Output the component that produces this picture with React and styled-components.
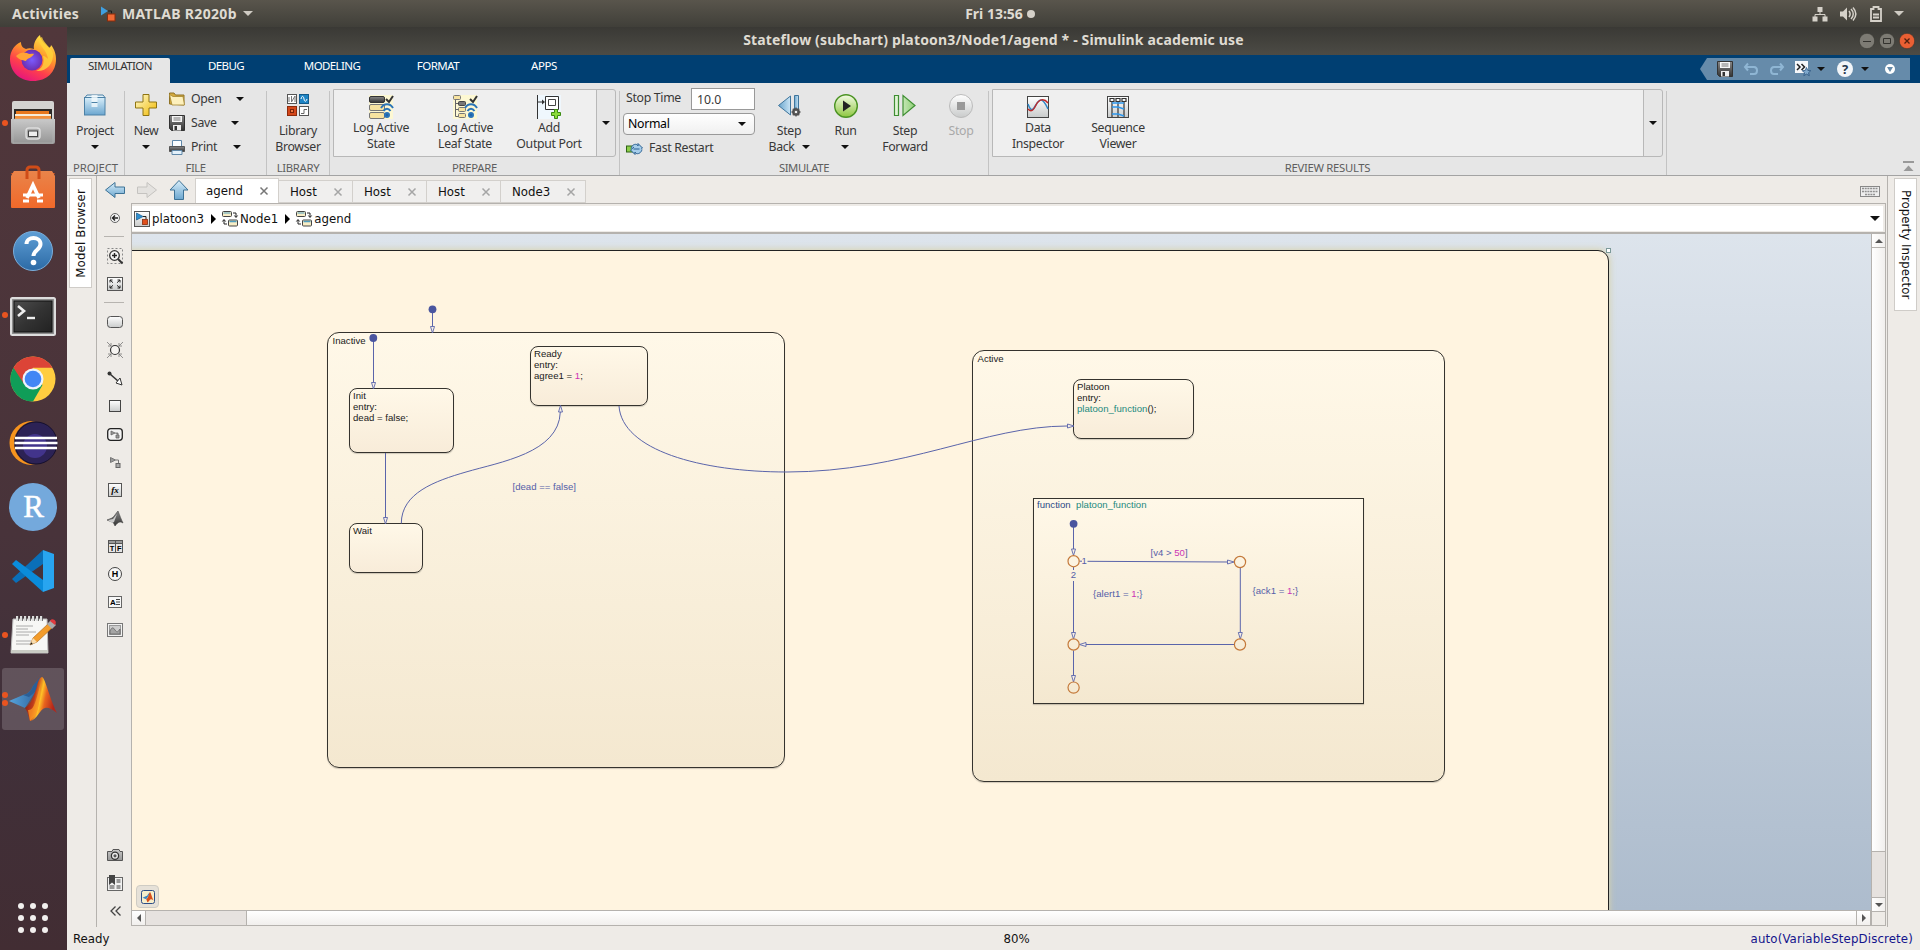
import React from "react";
import styled, { createGlobalStyle, css } from "styled-components";

const ui = `"Noto Sans", "Open Sans", sans-serif`;
const qt = `"DejaVu Sans Condensed", "DejaVu Sans", sans-serif`;

const Global = createGlobalStyle`
  * { box-sizing: border-box; }
  body { margin: 0; overflow: hidden; background: #eeebe7; }
  svg { display: block; flex: none; overflow: visible; }
`;

const Screen = styled.div`
  width: 1920px;
  height: 950px;
  display: flex;
  flex-direction: column;
  font: 13.1px/16px ${qt};
  color: #111;
  white-space: nowrap;
`;

/* ---------- desktop top bar ---------- */
const TopBar = styled.header`
  height: 27px;
  flex: none;
  display: grid;
  grid-template-columns: 1fr auto 1fr;
  align-items: center;
  padding: 0 16px 0 12px;
  background: linear-gradient(#59554c, #403f39);
  color: #dfdbd2;
  font: 700 14px/27px ${ui};
`;
const TopLeft = styled.div`
  display: flex;
  align-items: center;
`;
const TopLabel = styled.span`
  letter-spacing: ${(p) => p.$ls || 0}px;
  margin-left: ${(p) => p.$ml || 0}px;
`;
const Clock = styled.div`
  display: flex;
  align-items: center;
  gap: 4px;
  padding-left: 84px;
`;
const ClockDot = styled.i`
  width: 8px;
  height: 8px;
  border-radius: 50%;
  background: #d5d1c9;
`;
const Tray = styled.div`
  display: flex;
  align-items: center;
  justify-content: flex-end;
`;
const Spacer = styled.i`
  width: ${(p) => p.$w}px;
  flex: none;
`;
const Caret = styled.i`
  display: block;
  width: 0;
  height: 0;
  flex: none;
  border: ${(p) => p.$s || 4}px solid transparent;
  border-top-color: ${(p) => p.$c || "#111"};
  border-bottom: 0;
`;

const Desktop = styled.div`
  flex: 1;
  min-height: 0;
  display: flex;
`;

/* ---------- dock ---------- */
const Dock = styled.nav`
  width: 67px;
  flex: none;
  display: flex;
  flex-direction: column;
  background: linear-gradient(#51373b, #48333a 55%, #40303a 75%, #422d33);
`;
const DockItem = styled.div`
  height: 64px;
  display: flex;
  align-items: center;
  padding: 1px 2px;
`;
const DockTile = styled.div`
  width: 62px;
  height: 62px;
  position: relative;
  display: grid;
  place-items: center;
  border-radius: 3px;
  background: ${(p) => (p.$active ? "rgba(255,255,255,.17)" : "none")};
`;
const Running = styled.span`
  position: absolute;
  left: 0;
  top: 0;
  bottom: 0;
  display: flex;
  flex-direction: column;
  justify-content: center;
  gap: 2px;
  i { width: 6px; height: 6px; border-radius: 50%; background: #e95420; }
`;
const DockEnd = styled.div`
  margin-top: auto;
  padding: 0 0 17px 18px;
`;

/* ---------- window ---------- */
const Window = styled.main`
  flex: 1;
  min-width: 0;
  display: flex;
  flex-direction: column;
`;
const TitleBar = styled.div`
  height: 28px;
  flex: none;
  display: grid;
  grid-template-columns: 1fr auto 1fr;
  align-items: center;
  padding-right: 5px;
  background: linear-gradient(#3a3935, #4c4b45);
  color: #dfdbd2;
  font: 700 14px/26px ${ui};
  letter-spacing: 0.16px;
`;
const TitleText = styled.span`
  grid-column: 2;
  padding-left: 5px;
  margin-top: -2px;
`;
const WinButtons = styled.div`
  display: flex;
  justify-content: flex-end;
  gap: 4px;
`;
const Ribbon = styled.div`
  height: 28px;
  flex: none;
  display: flex;
  align-items: flex-start;
  gap: 6px;
  padding: 3px 10px 0 3px;
  background: #003f72;
`;
const RibbonTab = styled.div`
  width: 100px;
  height: 25px;
  text-align: center;
  font: 11.5px/16px ${ui};
  letter-spacing: ${(p) => p.$ls}px;
  border-radius: 2px 2px 0 0;
  color: ${(p) => (p.$active ? "#333" : "#fff")};
  background: ${(p) => (p.$active ? "#e6e6e6" : "none")};
`;
const QuickAccess = styled.div`
  width: 210px;
  height: 22px;
  margin-left: auto;
  display: flex;
  align-items: center;
  padding-left: 17px;
  background: #668baa;
  clip-path: polygon(7px 0, 100% 0, 100% 100%, 7px 100%, 0 50%);
`;

/* ---------- tool strip ---------- */
const Strip = styled.div`
  height: 93px;
  flex: none;
  display: flex;
  background: #e6e6e6;
  border-bottom: 1px solid #a3a3a3;
  color: #383838;
  font: 12.3px/16px ${ui};
  letter-spacing: -0.32px;
`;
const Section = styled.section`
  width: ${(p) => p.$w}px;
  flex: none;
  display: flex;
  flex-direction: column;
  background: linear-gradient(#c3c3c3, #c3c3c3) 100% 8px / 1px 84px no-repeat;
`;
const SectionBody = styled.div`
  height: 78px;
  display: flex;
  align-items: flex-start;
  padding-left: ${(p) => p.$pl || 0}px;
  padding-top: ${(p) => p.$pt ?? 9}px;
`;
const SectionName = styled.div`
  line-height: 14px;
  font-size: 11.3px;
  letter-spacing: ${(p) => p.$ls ?? -0.3}px;
  text-align: center;
  padding-right: 1px;
  color: #5e5e5e;
`;
const BigButton = styled.div`
  width: ${(p) => p.$w}px;
  flex: none;
  display: flex;
  flex-direction: column;
  align-items: center;
  gap: ${(p) => p.$gap ?? 5}px;
  margin-top: ${(p) => p.$mt || 0}px;
  text-align: center;
  color: ${(p) => (p.$off ? "#a9a9a9" : "inherit")};
`;
const BelowCaret = styled(Caret)`
  margin: 6px auto 0;
`;
const IconBox = styled.div`
  height: 26px;
  display: grid;
  place-items: center;
`;
const LabelRow = styled.div`
  display: flex;
  align-items: center;
  justify-content: center;
  gap: 7px;
`;
const FileList = styled.div`
  display: flex;
  flex-direction: column;
  margin-top: -5px;
`;
const FileItem = styled.div`
  height: 24px;
  display: flex;
  align-items: center;
`;
const FileLabel = styled.span`
  width: ${(p) => p.$w}px;
  padding-left: 6px;
`;
const Gallery = styled.div`
  height: 68px;
  display: flex;
  border: 1px solid #b8b8b8;
  border-radius: 0 3px 3px 0;
  width: ${(p) => p.$w}px;
`;
const GalleryItems = styled.div`
  flex: 1;
  display: flex;
  background: #efefef;
  padding: 4px 0 0 ${(p) => p.$pl}px;
  border-right: 1px solid #b8b8b8;
`;
const GalleryMore = styled.div`
  width: 18px;
  display: grid;
  place-items: center;
`;
const SimForm = styled.div`
  width: 132px;
  display: flex;
  flex-direction: column;
  gap: 3px;
`;
const FormRow = styled.div`
  height: 22px;
  display: flex;
  align-items: center;
  padding-left: 3px;
  gap: 6px;
  span { margin-top: -2px; }
`;
const Field = styled.div`
  width: 64px;
  height: 22px;
  margin-left: auto;
  padding: 1px 5px;
  line-height: 19px;
  letter-spacing: 0;
  background: #fff;
  border: 1px solid #999;
`;
const Combo = styled.div`
  height: 22px;
  display: flex;
  align-items: center;
  justify-content: space-between;
  padding: 0 8px 0 4px;
  color: #000;
  background: linear-gradient(#fff, #f0f0f0);
  border: 1px solid #999;
  border-radius: 4px;
`;
const Collapse = styled.div`
  margin: auto 6px 3px auto;
`;

/* ---------- editor ---------- */
const Workspace = styled.div`
  flex: 1;
  min-height: 0;
  display: flex;
  background: #eeebe7;
`;
const SideRail = styled.aside`
  width: ${(p) => p.$w}px;
  flex: none;
  padding: 2px 0 0 ${(p) => p.$pl}px;
`;
const SideTab = styled.div`
  width: 23px;
  height: ${(p) => p.$h}px;
  display: grid;
  place-items: center;
  background: #fff;
  border: 1px solid #cfccc8;
  span {
    writing-mode: vertical-rl;
    transform: ${(p) => (p.$flip ? "rotate(180deg)" : "none")};
    letter-spacing: ${(p) => p.$ls || 0}px;
  }
`;
const Editor = styled.div`
  width: 1792px;
  flex: none;
  display: flex;
  flex-direction: column;
  border: solid #b5b2ae;
  border-width: 0 1px;
`;
const DocTabs = styled.div`
  height: 27px;
  flex: none;
  display: flex;
  align-items: flex-end;
  padding-left: 8px;
`;
const NavIcons = styled.div`
  width: 90px;
  height: 25px;
  display: flex;
  align-items: center;
  gap: 12px;
  padding-bottom: 1px;
`;
const DocTab = styled.div`
  width: ${(p) => p.$w}px;
  height: ${(p) => (p.$active ? 25 : 23)}px;
  display: flex;
  align-items: center;
  justify-content: space-between;
  padding: 0 10px 0 ${(p) => (p.$active ? 10 : 11)}px;
  background: ${(p) => (p.$active ? "#fff" : "#f0efee")};
  border: 1px solid #d3d0cc;
  border-left-width: ${(p) => (p.$active ? 1 : 0)}px;
  border-bottom: ${(p) => (p.$active ? "0" : "1px solid #d3d0cc")};
`;
const Keyboard = styled.div`
  margin: 0 7px 6px auto;
`;
const Columns = styled.div`
  flex: 1;
  min-height: 0;
  display: flex;
`;
const Palette = styled.div`
  width: 34px;
  height: 722px;
  flex: none;
  display: flex;
  flex-direction: column;
  align-items: center;
  padding-top: 1px;
`;
const Tool = styled.div`
  height: 28px;
  display: grid;
  place-items: center;
  margin-left: 2px;
`;
const Rule = styled.div`
  height: 10px;
  width: 20px;
  flex: none;
  background: linear-gradient(#b7b4b0, #b7b4b0) 0 4px / 100% 1px no-repeat;
`;
const Grow = styled.div`
  flex: 1;
`;
const View = styled.div`
  width: 1755px;
  height: 723px;
  display: flex;
  flex-direction: column;
  border: 1px solid #b5b2ae;
`;
const Crumbs = styled.div`
  height: 28px;
  flex: none;
  display: flex;
  align-items: center;
  padding: 0 3px 0 2px;
  background: #fff;
  border: solid #eeebe7;
  border-width: 2px 2px 1px 0;
`;
const Crumb = styled.span`
  display: flex;
  align-items: center;
  gap: 2px;
`;
const CrumbArrow = styled.i`
  border: 5px solid transparent;
  border-left-color: #000;
  border-right: 0;
  margin: 0 6px 0 7px;
`;
const ViewBody = styled.div`
  flex: 1;
  min-height: 0;
  display: flex;
  border-top: 2px solid #b5b2ae;
`;
const ViewMain = styled.div`
  width: 1739px;
  display: flex;
  flex-direction: column;
`;
const Canvas = styled.div`
  height: 677px;
  position: relative;
  overflow: hidden;
  background: linear-gradient(#dde4ec, #adbccd);
`;
const Subchart = styled.div`
  position: absolute;
  left: -20px;
  top: 16px;
  width: 1497px;
  height: 700px;
  background: #fff4e0;
  border: 1px solid #222;
  border-radius: 11px;
  box-shadow: 0 0 6px 1px rgba(215, 210, 170, 0.9);
`;
const place = css`
  position: absolute;
  left: ${(p) => p.$x - 132}px;
  top: ${(p) => p.$y - 234}px;
`;
const State = styled.div`
  ${place}
  width: ${(p) => p.$w}px;
  height: ${(p) => p.$h}px;
  padding: ${(p) => p.$pad || "1px 3px"};
  border: 1px solid #35332e;
  border-radius: ${(p) => p.$r ?? 8}px;
  background: linear-gradient(#fff8e8, ${(p) => p.$end || "#f8ecd9"});
  box-shadow: 0 1px 1px rgba(0, 0, 0, 0.18);
  font: 9.6px/11px "Liberation Sans", Arial, sans-serif;
  color: #1a1a1a;
`;
const Note = styled.div`
  ${place}
  font: 9.6px/11px "Liberation Sans", Arial, sans-serif;
  color: #5560a8;
`;
const Num = styled.b`
  font-weight: 400;
  color: #cc33b5;
`;
const Fn = styled.span`
  color: #1d8a7e;
  margin-left: ${(p) => p.$ml || 0}px;
`;
const Keyword = styled.span`
  color: #2c4a86;
`;
const Wires = styled.svg`
  position: absolute;
  inset: 0;
`;
const Badge = styled.div`
  ${place}
  width: 23px;
  height: 23px;
  display: grid;
  place-items: center;
  border: 1px solid #cfccc4;
  border-radius: 4px;
  background: #e6e1d8;
`;
const HScroll = styled.div`
  height: 15px;
  display: flex;
  border-top: 1px solid #b5b2ae;
`;
const VScroll = styled.div`
  width: 14px;
  display: flex;
  flex-direction: column;
  border-left: 1px solid #b5b2ae;
`;
const ScrollPart = styled.div`
  ${(p) => (p.$vert ? "height" : "width")}: ${(p) => p.$len}px;
  flex: none;
  display: grid;
  place-items: center;
  border: 0 solid #b5b2ae;
  ${(p) => (p.$vert ? "border-bottom-width" : "border-right-width")}: 1px;
  background: ${(p) => (p.$track ? "#e6e2df" : `linear-gradient(${p.$vert ? "90deg" : "180deg"}, #fff, #f1efed)`)};
`;
const Corner = styled.div`
  flex: 1;
  background: #eeebe7;
`;
const StatusBar = styled.footer`
  height: 23px;
  flex: none;
  display: grid;
  grid-template-columns: 1fr auto 1fr;
  padding: 0 7px 0 6px;
  line-height: 24px;
  background: #eeebe7;
`;
const Zoom = styled.span`
  padding-left: 47px;
`;
const Solver = styled.span`
  text-align: right;
  color: #14148c;
  letter-spacing: 0.14px;
`;

/* ---------- drawings ---------- */
const S = ({ w = 16, h = w, vb, children }) => (
  <svg width={w} height={h} viewBox={vb || `0 0 ${w} ${h}`}>{children}</svg>
);

const HiddenSvg = styled.svg`
  position: absolute;
`;
const Defs = () => (
  <HiddenSvg width="0" height="0">
    <defs>
      <linearGradient id="blue" x2="0" y2="1"><stop stopColor="#d8eefa" /><stop offset="1" stopColor="#6ba6cf" /></linearGradient>
      <linearGradient id="blueH"><stop stopColor="#6aa5cd" /><stop offset="1" stopColor="#c9e4f5" /></linearGradient>
      <linearGradient id="gold" x2="1" y2="1"><stop stopColor="#fffbd0" /><stop offset="1" stopColor="#f0b800" /></linearGradient>
      <linearGradient id="pale" x2="0" y2="1"><stop stopColor="#fff" /><stop offset="1" stopColor="#c9cbcb" /></linearGradient>
      <linearGradient id="dark" x2="0" y2="1"><stop stopColor="#888" /><stop offset="1" stopColor="#333" /></linearGradient>
      <linearGradient id="green" x2="0" y2="1"><stop stopColor="#f4fbe6" /><stop offset="1" stopColor="#8ec63f" /></linearGradient>
      <linearGradient id="greenH"><stop stopColor="#e9f8e0" /><stop offset="1" stopColor="#8fce76" /></linearGradient>
      <linearGradient id="fire" x1=".8" y1="0" x2=".3" y2="1"><stop stopColor="#fff14f" /><stop offset=".4" stopColor="#ff9a2b" /><stop offset=".7" stopColor="#ff3f4c" /><stop offset="1" stopColor="#e5147f" /></linearGradient>
      <radialGradient id="globe"><stop stopColor="#7a5bff" /><stop offset="1" stopColor="#6b2fb0" /></radialGradient>
      <linearGradient id="bag" x2="0" y2="1"><stop stopColor="#e9844a" /><stop offset="1" stopColor="#f1692a" /></linearGradient>
      <linearGradient id="help" x2="0" y2="1"><stop stopColor="#5f9fd6" /><stop offset="1" stopColor="#2c6aa5" /></linearGradient>
      <linearGradient id="term" x2="1" y2="1"><stop stopColor="#4d4d4d" /><stop offset=".5" stopColor="#333" /><stop offset="1" stopColor="#222" /></linearGradient>
      <linearGradient id="steel" x2="0" y2="1"><stop stopColor="#c9c9c9" /><stop offset="1" stopColor="#979797" /></linearGradient>
      <linearGradient id="peak" x2="1" y2=".3"><stop stopColor="#5d0f14" /><stop offset=".4" stopColor="#c13b1b" /><stop offset=".58" stopColor="#ffc227" /><stop offset=".72" stopColor="#e8641e" /><stop offset="1" stopColor="#b3261b" /></linearGradient>
      <linearGradient id="wing" x2="1"><stop stopColor="#56a5dc" /><stop offset="1" stopColor="#2a5b96" /></linearGradient>
    </defs>
  </HiddenSvg>
);

const MatlabLogo = ({ w, h }) => (
  <S w={w} h={h} vb="0 0 48 46">
    <path d="M0 25l14-6c5-1 8-4 10-9 3-4 5-6 8-9l-5 14-11 17z" fill="url(#wing)" />
    <path d="M14 19c5-1 8-4 10-9 3-4 5-6 8-9l-5 14-7 6z" fill="#2b5f97" />
    <path d="M16 32c6-4 9-12 12-22 1-5 3-9 5-9 3 0 7 20 15 36-5-4-9-6-12-5-5 1-8 12-15 13-2-6-2-9-5-13z" fill="url(#peak)" />
    <path d="M19 34c6 1 8-9 13-28-2 14-1 26-6 34l-5 5z" fill="#ff9a24" opacity=".75" />
  </S>
);

const Simulink = ({ s = 16, grey, frame }) => (
  <S w={s} vb="0 0 16 16">
    {frame && <rect x=".5" y=".5" width="15" height="15" fill="url(#pale)" stroke="#555" />}
    <path d="M2.500 2l6.500 3.500-6.500 3.500z" fill={grey ? "#999" : "#2e8fd0"} stroke={grey ? "#666" : "#175a8c"} strokeWidth=".7" />
    <path d="M9 5.500h3v3" fill="none" stroke={grey ? "#666" : "#222"} />
    <rect x="8.500" y="8.500" width="5" height="5" fill={grey ? "#aaa" : "#e0501d"} stroke={grey ? "#555" : "#8a2b0b"} strokeWidth=".8" />
  </S>
);

const SimulinkBadge = () => (
  <S w={16}>
    <path d="M1 .5l7 4.500-7 4.500z" fill="#3f9fe0" />
    <path d="M8 5h3.500v2.500" fill="none" stroke="#1d1d1d" />
    <rect x="7.500" y="8" width="7.500" height="7" fill="#ee6a35" stroke="#8a2b0b" />
  </S>
);

const Chart = () => (
  <S>
    <rect x=".5" y=".5" width="9" height="5" rx="1" fill="#f8edc5" stroke="#444" />
    <path d="M1.500 2h7" stroke="#4f9ec0" />
    <rect x="6.500" y="9" width="9" height="6" rx="1" fill="#f8edc5" stroke="#444" />
    <path d="M7.500 10.500h7" stroke="#4f9ec0" strokeWidth="1.500" />
    <path d="M11 2h3v4M12.400 4.500l1.600 2 1.600-2M5 13H2V9M.4 10.500L2 8.500l1.600 2" fill="none" stroke="#222" />
  </S>
);

const Floppy = ({ s = 16 }) => (
  <S w={s} vb="0 0 16 16">
    <path d="M.5.5h15v15h-13l-2-2z" fill="url(#dark)" stroke="#333" />
    <rect x="3" y="1" width="10" height="6" fill="#f6f6f6" />
    <path d="M4.500 3h7M4.500 5h7" stroke="#777" />
    <path d="M4 10h8v5.500H4z" fill="#eee" /><path d="M5.500 11h2.500v4H5.500z" fill="#333" />
  </S>
);

const Cross = ({ c = "#a5a5a5" }) => (
  <S w={8}><path d="M.5.5l7 7m0-7l-7 7" stroke={c} strokeWidth="1.500" /></S>
);

const gear = <g><circle cx="18" cy="18" r="3" fill="#ddd" stroke="#444" strokeWidth="1.600" /><path d="M18 13.500v9M13.500 18h9M14.800 14.800l6.400 6.400M21.200 14.800l-6.400 6.400" stroke="#555" strokeWidth="1.300" /><circle cx="18" cy="18" r="1.800" fill="#eee" stroke="#444" strokeWidth=".8" /></g>;
const check = <path d="M17 4l3 3 4-6" fill="none" stroke="#333" strokeWidth="2" />;
const waves = <g fill="none" stroke="#2a74b8" strokeWidth="2"><path d="M12 13c3-5 9-5 12 0M14.500 16c2-3 5-3 7 0" /><circle cx="18" cy="20" r="2" fill="#1c62a6" /></g>;

const icons = {
  firefox: (
    <S w={46} h={48}>
      <path d="M23 46C9 46 0 36 0 24 0 16 5 9 11 7c0 4 2 6 5 7 2-1 5-1 8 0-1-5 2-11 6-14 1 7 6 9 9 13 2-1 2-3 2-3 4 5 5 10 5 14 0 13-9 22-23 22z" fill="url(#fire)" />
      <circle cx="22" cy="25" r="10.500" fill="url(#globe)" />
      <path d="M6 21c4-4 8-4 11-3 3 2 6 0 7 1-2 4-7 4-8 7-4-1-7-1-10-5z" fill="#ffa436" />
      <path d="M28 4c2 8 9 11 10 20-1-1-3-3-5-3 2 7-1 13-7 15 10 1 18-7 17-18-2-6-9-9-11-16z" fill="#ffd43a" opacity=".8" />
    </S>
  ),
  files: (
    <S w={44}>
      <rect x="1" y="0" width="42" height="20" rx="2" fill="#d4d3d1" /><rect x="3" y="8" width="38" height="16" fill="#2d2a28" />
      <path d="M5 10h33v6H5z" fill="#e8781e" /><path d="M4 13h36v2H4z" fill="#f7ecd9" /><path d="M4 15h36v4H4z" fill="#f3913c" />
      <path d="M0 18h44v23a2 2 0 01-2 2H2a2 2 0 01-2-2z" fill="url(#steel)" /><path d="M2 18h40v24H2z" fill="url(#steel)" stroke="#bbb" strokeWidth=".5" />
      <rect x="15" y="27" width="14" height="11" rx="3" fill="#aaa" stroke="#ddd" strokeWidth="1.500" /><rect x="17.500" y="30" width="9" height="5.500" fill="#eee" stroke="#444" />
    </S>
  ),
  store: (
    <S w={44}>
      <path d="M0 8h5l-3 3zM44 8h-5l3 3z" fill="#d9531c" /><path d="M3 6h38l3 5v31a1 1 0 01-1 1H1a1 1 0 01-1-1V11z" fill="url(#bag)" />
      <path d="M16 14V5a3 3 0 013-3h6a3 3 0 013 3v9" fill="none" stroke="#cf4c18" strokeWidth="3" />
      <path d="M16 33l6-13 6 13" fill="none" stroke="#fff" strokeWidth="3.600" /><path d="M12 30h20M12 36h6M26 36h6" stroke="#fff" strokeWidth="3" />
    </S>
  ),
  help: (
    <S w={42}>
      <circle cx="21" cy="21" r="19.500" fill="url(#help)" stroke="#7aaedb" />
      <path d="M14.500 14c0-8 14-8 14 0 0 6-7 6-7 12" fill="none" stroke="#fff" strokeWidth="4" /><circle cx="21.500" cy="32.500" r="2.800" fill="#fff" />
    </S>
  ),
  terminal: (
    <S w={46} h={36}>
      <rect x="1" y="1" width="44" height="37" rx="1.500" fill="#8d8d8d" stroke="#ddd" strokeWidth="2" /><rect x="4" y="4" width="38" height="31" fill="url(#term)" stroke="#111" />
      <path d="M8 9l6 5-6 5" fill="none" stroke="#eee" strokeWidth="2.600" /><path d="M17 21h8" stroke="#eee" strokeWidth="2.400" />
    </S>
  ),
  chrome: (
    <S w={46} vb="-23 -23 46 46">
      <circle r="22.500" fill="#ffcd40" /><path d="M0 0L-19.500-11.300A22.500 22.500 0 000 22.500L9.500 6z" fill="#109d58" />
      <path d="M-19.500-11.300A22.500 22.500 0 0119.500-11.200H0L-9 5z" fill="#dc4437" /><circle r="10.500" fill="#eef3fb" /><circle r="8.300" fill="#4286f5" />
    </S>
  ),
  eclipse: (
    <S w={50} h={44}>
      <circle cx="23.500" cy="22" r="22" fill="#f7941e" /><circle cx="28" cy="22" r="22" fill="#4b333a" /><circle cx="28" cy="22" r="21" fill="#2c2255" stroke="#15102e" />
      <circle cx="27" cy="25" r="12" fill="#42348b" /><path d="M7 17h42M6.500 22h43M7 27h42" stroke="#fff" strokeWidth="2.400" />
    </S>
  ),
  r: (
    <S w={48}>
      <circle cx="24" cy="24" r="24" fill="#74a9dc" />
      <text x="24.500" y="33.500" textAnchor="middle" fontSize="31" fontFamily="Liberation Serif, serif" fill="#fff" stroke="#fff" strokeWidth=".5">R</text>
    </S>
  ),
  vscode: (
    <S w={42}>
      <path d="M31 0L0 29l4 4 27-19z" fill="#0a6fb8" /><path d="M31 42L0 14l4-4 27 20z" fill="#0a8cdb" /><path d="M31 0l11 4v34l-11 4z" fill="#28a5f0" />
    </S>
  ),
  editor: (
    <S w={46} h={38}>
      <path d="M3 3h34l1 34H1z" fill="#f7f7f5" stroke="#bbb" /><path d="M1 34h37v3H1z" fill="#c9ccc4" />
      <path d="M6 10h17M6 13h12M6 16h20M6 19h13M6 25h15M6 28h17" stroke="#aaa" /><path d="M7 0v5m4-5v5m4-5v5m4-5v5m4-5v5m4-5v5m4-5v5" stroke="#ddd" strokeWidth="2" /><path d="M8.500 0v5m4-5v5m4-5v5m4-5v5m4-5v5m4-5v5m4-5v5" stroke="#555" strokeWidth=".8" />
      <path d="M20 29l3-7L39 7l4 4-16 15z" fill="#f39c2b" stroke="#a8600d" strokeWidth=".6" /><path d="M20 29l3-7 4 4z" fill="#f8dcae" /><path d="M20 29l1.200-2.700 1.500 1.500z" fill="#222" /><path d="M37 8l4-4 5 5-4 4z" fill="#aaa" /><path d="M40 5c2-4 8 0 5 4z" fill="#e03a3e" />
    </S>
  ),
  matlab: <MatlabLogo w={48} h={46} />,
  project: (
    <S w={22}>
      <rect x=".5" y="3.500" width="20.500" height="17.500" fill="url(#blue)" stroke="#4c81a6" /><path d="M1 3.500L3 1h16l2 2.500z" fill="#e3f2fa" stroke="#4c81a6" /><path d="M7.500 1h6v12h-6z" fill="#f4fafd" opacity=".8" /><path d="M7.500 8.500h6" stroke="#4c81a6" />
    </S>
  ),
  plus: <S w={22}><path d="M8 .5h6V8h7.500v6H14v7.500H8V14H.5V8H8z" fill="url(#gold)" stroke="#8f7412" /></S>,
  folder: <S w={16} h={14}><path d="M.5 12V1H5l1.500 2H15v10z" fill="#d4a93c" stroke="#8f7326" /><path d="M.5 2.500L3 13h12.500L14 4.500H4z" fill="#fdf0bc" stroke="#a5862f" strokeWidth=".8" /></S>,
  printer: <S w={16} h={15}><path d="M3.500.5h9v6h-9z" fill="#fafdff" stroke="#5f87a8" /><path d="M.5 6.500h15v5H.5z" fill="url(#dark)" stroke="#555" /><path d="M3 10.500h10v4H3z" fill="#e2f0fa" stroke="#5f87a8" /></S>,
  library: (
    <S w={22}>
      <rect x=".5" y=".5" width="9" height="9" fill="#fff" stroke="#555" /><path d="M2 8V3m2.500 5V2M4.500 8L8 2v6" fill="none" stroke="#777" /><rect x="12.500" y=".5" width="9" height="9" fill="#1d84c5" stroke="#135a8a" /><path d="M14 5c1-4 2.500-3 3 0s2 3 3 0" fill="none" stroke="#fff" />
      <rect x=".5" y="12.500" width="9" height="9" fill="#d4471a" stroke="#8e2a0b" /><rect x="3.500" y="15.500" width="3" height="3" fill="#ee7a46" stroke="#79230a" /><rect x="12.500" y="12.500" width="9" height="9" fill="#fff" stroke="#555" /><path d="M14 19.500h3v-4h3" fill="none" stroke="#666" />
    </S>
  ),
  logState: (
    <S w={24}>
      <rect width="24" height="24" fill="#fdf8d3" /><rect x=".5" y="1.500" width="15" height="6" rx="1.500" fill="url(#dark)" stroke="#333" />
      <rect x=".5" y="9.500" width="15" height="6" rx="1.500" fill="#f7e3a0" stroke="#777" /><rect x=".5" y="17.500" width="15" height="6" rx="1.500" fill="#f7e3a0" stroke="#777" />{check}{waves}
    </S>
  ),
  logLeaf: (
    <S w={24}>
      <rect width="24" height="24" fill="#fdf8d3" /><path d="M2.500 4v17.500H6M2.500 8.500H6M2.500 14.500H6" fill="none" stroke="#666" />
      <rect x=".5" y=".5" width="7" height="4" rx="1" fill="#f7e3a0" stroke="#777" /><rect x="5.500" y="6.500" width="7" height="4" rx="1" fill="#777" stroke="#444" />
      <rect x="5.500" y="12.500" width="7" height="4" rx="1" fill="#f7e3a0" stroke="#777" /><rect x="5.500" y="18.500" width="7" height="4" rx="1" fill="#f7e3a0" stroke="#777" />{check}{waves}
    </S>
  ),
  addPort: (
    <S w={24}>
      <rect width="24" height="24" fill="#eff7fd" /><path d="M.5 0v24M1 7h6" stroke="#333" /><path d="M5 4.500L8 7 5 9.500z" fill="#333" /><path d="M8.500 1.500h13v13h-13z" fill="#fff" stroke="#333" /><path d="M11.500 4.500h7v6h-7z" fill="none" stroke="#444" />
      <path d="M17.500 14.500h3v3h3v3h-3v3h-3v-3h-3v-3h3z" fill="#8bdc3c" stroke="#3d8c12" />
    </S>
  ),
  fast: (
    <S w={17} h={12}>
      <rect x=".5" y="3" width="7" height="6" fill="#8dcf4a" stroke="#2f6316" /><path d="M5 5.500C6 1 11 0 12 3V.5L16.500 5 13 8" fill="#a6cdea" stroke="#285f92" /><path d="M16 6.500C15 11 10 12 9 9v2.500L4.500 7 8 4" fill="#a6cdea" stroke="#285f92" /><path d="M7.500 6h6" stroke="#285f92" />
    </S>
  ),
  stepBack: <S w={23} h={24}><path d="M12.500 2v19L.5 11.500z" fill="url(#blueH)" stroke="#3f759c" /><path d="M16.500 1.500h4v19h-4z" fill="url(#blueH)" stroke="#3f759c" />{gear}</S>,
  run: <S w={24}><circle cx="12" cy="12" r="11.300" fill="url(#green)" stroke="#4b9323" strokeWidth="1.400" /><path d="M9 6.500l8 5.500-8 5.500z" fill="#222" /></S>,
  stepFwd: <S w={22} h={22}><path d="M.5.500h4v20h-4zM9 .5v20L21 10.500z" fill="url(#greenH)" stroke="#3f8f33" strokeWidth="1.200" /></S>,
  stop: <S w={24}><circle cx="12" cy="12" r="11.500" fill="url(#pale)" stroke="#bbb" /><rect x="8" y="8" width="8" height="8" fill="#999" /></S>,
  inspector: <S w={22}><rect x=".5" y=".5" width="21" height="21" fill="url(#pale)" stroke="#444" /><path d="M1 8c2 6 4 7 6 4S11 4 14 4s5 5 7 9" fill="none" stroke="#2e86c8" strokeWidth="1.500" /><path d="M1 13c3 3 5 2 8-4s8-7 12-2" fill="none" stroke="#c02a2a" strokeWidth="1.500" /></S>,
  sequence: <S w={22}><rect x=".5" y=".5" width="21" height="21" fill="url(#pale)" stroke="#444" /><path d="M3 2.500h4v3H3zM9 2.500h4v3H9zM15 2.500h4v3h-4zM5 6v15M11 6v15M17 6v15" fill="none" stroke="#333" strokeWidth="1.200" /><path d="M5 7h12M5 11h6l6 2M5 18h6l6 2" fill="none" stroke="#2e97ec" strokeWidth="1.400" /></S>,
};

const tools = [
  <S w={10}><circle cx="5" cy="5" r="4.500" fill="#f4f4f4" stroke="#666" /><path d="M8 5H3M5 2.500L2.500 5 5 7.500" fill="none" stroke="#222" strokeWidth="1.400" /></S>,
  "rule",
  <S><rect x=".5" y=".5" width="15" height="15" fill="none" stroke="#888" strokeDasharray="2 2" /><circle cx="7.500" cy="7.500" r="4.800" fill="#f5f5f5" stroke="#333" strokeWidth="1.300" /><path d="M7.500 5v5M5 7.500h5" stroke="#222" strokeWidth="1.400" /><path d="M11 11l4.500 4.500" stroke="#333" strokeWidth="2" /></S>,
  <S w={16} h={14}><rect x=".5" y=".5" width="15" height="13" fill="url(#pale)" stroke="#555" /><path d="M3 5.500V3h2.500M10.500 3H13v2.500M13 8.500V11h-2.500M5.500 11H3V8.500M3 3l3 2.700M13 3l-3 2.700M3 11l3-2.700M13 11l-3-2.700" fill="none" stroke="#222" /></S>,
  "rule",
  <S w={16} h={12}><rect x=".5" y=".5" width="15" height="11" rx="3" fill="url(#pale)" stroke="#555" /></S>,
  <S><circle cx="8" cy="8" r="4.500" fill="#f6f4f1" stroke="#333" strokeWidth="1.200" /><path d="M0 0l4 4M16 0l-4 4M0 16l4-4M16 16l-4-4M1 4h3V1M12 1v3h3M1 12h3v3M12 15v-3h3" fill="none" stroke="#777" strokeWidth=".8" /></S>,
  <S w={16} h={15}><circle cx="2.500" cy="2.500" r="2" fill="#333" /><path d="M3 3l8 7" stroke="#333" strokeWidth="1.600" /><path d="M15 14l-6-2 4-5z" fill="#fff" stroke="#333" /></S>,
  <S w={12}><rect x=".5" y=".5" width="11" height="11" fill="url(#pale)" stroke="#444" /></S>,
  <S w={16} h={13}><rect x=".7" y=".7" width="14.600" height="11.600" rx="3" fill="#f3f3f3" stroke="#222" strokeWidth="1.300" /><path d="M4 3l4 2-4 2zM9 7h3v3H9zM8 5h3v2" fill="#999" stroke="#666" strokeWidth=".8" /></S>,
  <S w={11} h={11}><path d="M.5.5l5 2.500-5 2.500z" fill="#999" stroke="#777" /><path d="M5.500 3h3v3.500" fill="none" stroke="#777" /><rect x="6" y="6.500" width="4" height="4" fill="#aaa" stroke="#666" /></S>,
  <S w={14}><rect x=".5" y=".5" width="13" height="13" fill="url(#pale)" stroke="#555" /><text x="7" y="10" textAnchor="middle" fontSize="9" fontStyle="italic" fontWeight="700" fontFamily="Liberation Serif">fx</text></S>,
  <S w={16} h={15}><path d="M0 9l5-2c2-1 4-5 6-7 2 5 3 8 5 12-3-2-5-1-8 3-1-2-1-3-3-4z" fill="url(#dark)" stroke="#444" strokeWidth=".6" /><path d="M1 9l5-1 4-5-3 8-2 1z" fill="#ccc" /></S>,
  <S w={15} h={13}><rect x=".5" y=".5" width="14" height="12" fill="#e5e5e5" stroke="#555" /><path d="M1 2h13" stroke="#999" strokeWidth="2" /><path d="M0 3.500h15M7.500 0v13" stroke="#555" /><text x="4" y="11" textAnchor="middle" fontSize="7.500" fontWeight="700" fontFamily="Liberation Sans">T</text><text x="11.300" y="11" textAnchor="middle" fontSize="7.500" fontWeight="700" fontFamily="Liberation Sans">F</text></S>,
  <S w={14}><circle cx="7" cy="7" r="6.500" fill="#f7f7f7" stroke="#444" /><text x="7" y="10.200" textAnchor="middle" fontSize="9" fontWeight="700" fontFamily="Liberation Sans">H</text></S>,
  <S w={14} h={12}><rect x=".5" y=".5" width="13" height="11" fill="#f7f7f7" stroke="#666" /><text x="4.800" y="9" textAnchor="middle" fontSize="8" fontWeight="700" fontFamily="Liberation Sans">A</text><path d="M8 3.500h4M8 6h4M8 8.500h4" stroke="#444" /></S>,
  <S w={16} h={14}><rect x=".5" y=".5" width="15" height="13" fill="#f2f2f2" stroke="#777" /><rect x="2.500" y="2.500" width="11" height="9" fill="#ccc" stroke="#999" /><path d="M3 8c2-4 3-4 5-1s3 2 5-1v5H3z" fill="#a5a5a5" stroke="#666" strokeWidth=".8" /></S>,
  "grow",
  <S w={16} h={12}><path d="M.5 2.500H5L6 .5h6l1 2h2.500v9H.5z" fill="url(#steel)" stroke="#555" /><circle cx="8" cy="6.800" r="3.600" fill="#eee" stroke="#333" strokeWidth="1.300" /><circle cx="8" cy="6.800" r="1.600" fill="#555" /></S>,
  <S w={16} h={16}><rect x=".5" y="2.500" width="15" height="13" fill="#f1f1f1" stroke="#666" /><path d="M9.500 4h4v4h-4zM9.500 10h4v4h-4zM2.500 10h5v4h-5z" fill="#999" /><path d="M2 0h6v10L5 7.500 2 10z" fill="#444" /></S>,
  <S w={11} h={10}><path d="M5.500.5L1 5l4.500 4.500M10.500.5L6 5l4.500 4.500" fill="none" stroke="#444" strokeWidth="1.300" /></S>,
];

const NavArrow = ({ off, up }) => (
  <S w={20} h={up ? 20 : 16}>
    <path d={up ? "M10 .5L19 10h-4.500v9.500h-9V10H1z" : "M.5 8L10 .5v4.500h9.500v6.500H10v4z"} transform={off ? "matrix(-1 0 0 1 20 0)" : undefined} fill={off ? "#e4e2df" : "url(#blue)"} stroke={off ? "#c5c3c0" : "#3d7296"} />
  </S>
);

const WinButton = ({ kind }) => (
  <S w={16}>
    <circle cx="8" cy="8" r="7.700" fill={kind === "x" ? "#ea5f33" : "#7d7b74"} stroke="#33322e" strokeWidth=".6" />
    {kind === "min" && <path d="M4 8.500h8" stroke="#33322e" />}
    {kind === "max" && <path d="M4.500 5.500h7v5h-7z" fill="none" stroke="#33322e" />}
    {kind === "x" && <path d="M5.500 5.500l5 5m0-5l-5 5" stroke="#51200f" strokeWidth="1.300" />}
  </S>
);

/* arrow head whose tip lies at (x, y), turned by r degrees from pointing down */
const Head = ({ x, y, r = 0 }) => <path d="M0 0L-2-6.500H2z" transform={`translate(${x} ${y}) rotate(${r})`} fill="#f6efe6" strokeWidth=".9" />;

const Transitions = () => (
  <Wires width="1739" height="677" viewBox="132 234 1739 677" fill="none" stroke="#5a64aa">
    <path d="M432.500 310v16M373.500 338v44M385.500 453v65" />
    <path d="M401.300 523.500C401.300 493 435 481 466 472C500 462 559 453 560.300 412" />
    <path d="M619 406C622 450 700 472 787 472C905 472 985 426 1067 426" />
    <path d="M1073.500 524v26M1073.500 567v3M1073.500 581v51M1079.500 561.200h2.500M1087.500 561.300L1228 562M1240.300 568v64M1234 644.500H1086M1073.500 650.500v25" />
    <Head x={432.5} y={333} /><Head x={373.5} y={389} /><Head x={385.5} y={524} /><Head x={560.5} y={405.500} r={180} /><Head x={1074} y={426} r={-90} />
    <Head x={1073.5} y={555.5} /><Head x={1234} y={562} r={-90} /><Head x={1240.3} y={639} /><Head x={1079.5} y={644.500} r={90} /><Head x={1073.5} y={639} /><Head x={1073.5} y={682} />
    <g fill="#4a559f" stroke="none"><circle cx="432.500" cy="309.300" r="3.900" /><circle cx="373.300" cy="338" r="3.900" /><circle cx="1073.600" cy="523.800" r="3.900" /></g>
    <g stroke="#c4793a" strokeWidth="1.200"><circle cx="1073.600" cy="561.200" r="5.600" /><circle cx="1240" cy="562" r="5.600" /><circle cx="1073.600" cy="644.500" r="5.600" /><circle cx="1240" cy="644.500" r="5.600" /><circle cx="1073.600" cy="687.600" r="5.600" /></g>
    <rect x="1606.500" y="248.500" width="4" height="4" fill="#fff" stroke="#7c9a9a" />
  </Wires>
);

const dock = [
  ["firefox", 0], ["files", 1], ["store", 0], ["help", 0], ["terminal", 1], ["chrome", 0],
  ["eclipse", 0], ["r", 0], ["vscode", 0], ["editor", 1], ["matlab", 2],
];

const Tri = ({ d }) => <S w={8}><path d={{ u: "M0 6l4-4 4 4z", d: "M0 2l4 4 4-4z", l: "M6 0L2 4l4 4z", r: "M2 0l4 4-4 4z" }[d]} fill="#555" /></S>;

export default function App() {
  return (
    <Screen>
      <Global />
      <Defs />
      <TopBar>
        <TopLeft>
          <TopLabel $ls={0.2}>Activities</TopLabel>
          <Spacer $w={21} />
          <SimulinkBadge />
          <TopLabel $ml={6} $ls={0.33}>MATLAB R2020b</TopLabel>
          <Spacer $w={6} />
          <Caret $s={5} $c="#cfcbc3" />
        </TopLeft>
        <Clock>Fri 13:56<ClockDot /></Clock>
        <Tray>
          <S w={16}><path d="M5.500 1h5v5h-5zM.5 10.500h5v5h-5zM10.500 10.500h5v5h-5z" fill="#d5d1c9" /><path d="M8 6v2.500M3 11V8.500h10V11" fill="none" stroke="#d5d1c9" /></S>
          <Spacer $w={12} />
          <S w={16}><path d="M0 5.500h3l4-4v13l-4-4H0z" fill="#d5d1c9" /><path d="M9 5c1.500 2 1.500 4 0 6M11 3c3 3 3 7 0 10M13 1.500c3.500 4 3.500 9 0 13" fill="none" stroke="#d5d1c9" strokeWidth="1.500" /></S>
          <Spacer $w={14} />
          <S w={12} h={16}><path d="M1 3h2.500V1h5v2H11v12H1z" fill="none" stroke="#d5d1c9" strokeWidth="1.800" /><path d="M3 8.500h6M3 11.500h6" stroke="#d5d1c9" strokeWidth="2" /></S>
          <Spacer $w={12} />
          <Caret $s={5} $c="#cfcbc3" />
        </Tray>
      </TopBar>
      <Desktop>
        <Dock>
          {dock.map(([name, n]) => (
            <DockItem key={name}>
              <DockTile $active={name === "matlab"}>
                {icons[name]}
                {n > 0 && <Running>{Array.from({ length: n }, (_, i) => <i key={i} />)}</Running>}
              </DockTile>
            </DockItem>
          ))}
          <DockEnd>
            <S w={30}>{[3, 15, 27].flatMap((y) => [3, 15, 27].map((x) => <circle key={x + "-" + y} cx={x} cy={y} r="3" fill="#f2f0ee" />))}</S>
          </DockEnd>
        </Dock>
        <Window>
          <TitleBar>
            <TitleText>Stateflow (subchart) platoon3/Node1/agend * - Simulink academic use</TitleText>
            <WinButtons><WinButton kind="min" /><WinButton kind="max" /><WinButton kind="x" /></WinButtons>
          </TitleBar>
          <Ribbon>
            <RibbonTab $active $ls={-0.58}>SIMULATION</RibbonTab>
            <RibbonTab $ls={-0.65}>DEBUG</RibbonTab>
            <RibbonTab $ls={-0.62}>MODELING</RibbonTab>
            <RibbonTab $ls={-0.5}>FORMAT</RibbonTab>
            <RibbonTab $ls={-0.4}>APPS</RibbonTab>
            <QuickAccess>
              <Floppy />
              <Spacer $w={11} />
              <S w={14} h={12}><path d="M4 .5L1 4l3 3.500M1.500 4H10c4 0 4 7 0 7H6" fill="none" stroke="#8fb6d4" strokeWidth="2" /></S>
              <Spacer $w={12} />
              <S w={14} h={12}><path d="M10 .5L13 4l-3 3.500M12.500 4H4c-4 0-4 7 0 7h4" fill="none" stroke="#8fb6d4" strokeWidth="2" /></S>
              <Spacer $w={11} />
              <S><rect width="13" height="12" fill="#f5f7fa" /><path d="M2 3l3 3-3 3M6.500 3l3 3-3 3" fill="none" stroke="#222" strokeWidth="1.500" /><path d="M11.500 6.500l1.300 3 3 .2-2.300 2 .8 3-2.800-1.600-2.700 1.600.8-3-2.400-2 3-.2z" fill="#7fa9cd" stroke="#2c5580" strokeWidth=".8" /></S>
              <Spacer $w={6} />
              <Caret />
              <Spacer $w={12} />
              <S><circle cx="8" cy="8" r="8" fill="#f2f5f8" /><text x="8" y="12.500" textAnchor="middle" fontSize="13" fontWeight="700" fontFamily="Noto Sans" fill="#26384d">?</text></S>
              <Spacer $w={8} />
              <Caret />
              <Spacer $w={16} />
              <S w={10}><circle cx="5" cy="5" r="5" fill="#fff" /><path d="M2 3h6L5 8z" fill="#668baa" /></S>
            </QuickAccess>
          </Ribbon>
          <Strip>
            <Section $w={58}>
              <SectionBody>
                <BigButton $w={56}><IconBox>{icons.project}</IconBox><div>Project<BelowCaret /></div></BigButton>
              </SectionBody>
              <SectionName $ls={-0.1}>PROJECT</SectionName>
            </Section>
            <Section $w={142}>
              <SectionBody $pl={1}>
                <BigButton $w={40}><IconBox>{icons.plus}</IconBox><div>New<BelowCaret /></div></BigButton>
                <Spacer $w={3} />
                <FileList>
                  <FileItem>{icons.folder}<FileLabel $w={51}>Open</FileLabel><Caret /></FileItem>
                  <FileItem><Floppy /><FileLabel $w={46}>Save</FileLabel><Caret /></FileItem>
                  <FileItem>{icons.printer}<FileLabel $w={48}>Print</FileLabel><Caret /></FileItem>
                </FileList>
              </SectionBody>
              <SectionName $ls={-0.5}>FILE</SectionName>
            </Section>
            <Section $w={63}>
              <SectionBody>
                <BigButton $w={62}><IconBox>{icons.library}</IconBox><div>Library<br />Browser</div></BigButton>
              </SectionBody>
              <SectionName>LIBRARY</SectionName>
            </Section>
            <Section $w={290}>
              <SectionBody $pl={3} $pt={6}>
                <Gallery $w={283}>
                  <GalleryItems $pl={5}>
                    <BigButton $w={84} $gap={0}><IconBox>{icons.logState}</IconBox><div>Log Active<br />State</div></BigButton>
                    <BigButton $w={84} $gap={0}><IconBox>{icons.logLeaf}</IconBox><div>Log Active<br />Leaf State</div></BigButton>
                    <BigButton $w={84} $gap={0}><IconBox>{icons.addPort}</IconBox><div>Add<br />Output Port</div></BigButton>
                  </GalleryItems>
                  <GalleryMore><Caret /></GalleryMore>
                </Gallery>
              </SectionBody>
              <SectionName $ls={-0.3}>PREPARE</SectionName>
            </Section>
            <Section $w={369}>
              <SectionBody $pl={3} $pt={5}>
                <SimForm>
                  <FormRow><span>Stop Time</span><Field>10.0</Field></FormRow>
                  <Combo>Normal<Caret /></Combo>
                  <FormRow>{icons.fast}<span>Fast Restart</span></FormRow>
                </SimForm>
                <Spacer $w={5} />
                <BigButton $w={58} $mt={5} $gap={4}><IconBox>{icons.stepBack}</IconBox><div>Step<LabelRow>Back<Caret /></LabelRow></div></BigButton>
                <BigButton $w={55} $mt={5} $gap={4}><IconBox>{icons.run}</IconBox><div>Run<BelowCaret /></div></BigButton>
                <BigButton $w={64} $mt={5} $gap={4}><IconBox>{icons.stepFwd}</IconBox><div>Step<br />Forward</div></BigButton>
                <BigButton $w={48} $mt={5} $gap={4} $off><IconBox>{icons.stop}</IconBox><div>Stop</div></BigButton>
              </SectionBody>
              <SectionName $ls={-0.4}>SIMULATE</SectionName>
            </Section>
            <Section $w={678}>
              <SectionBody $pl={3} $pt={6}>
                <Gallery $w={671}>
                  <GalleryItems $pl={5}>
                    <BigButton $w={80} $gap={0}><IconBox>{icons.inspector}</IconBox><div>Data<br />Inspector</div></BigButton>
                    <BigButton $w={80} $gap={0}><IconBox>{icons.sequence}</IconBox><div>Sequence<br />Viewer</div></BigButton>
                  </GalleryItems>
                  <GalleryMore><Caret /></GalleryMore>
                </Gallery>
              </SectionBody>
              <SectionName $ls={-0.3}>REVIEW RESULTS</SectionName>
            </Section>
            <Collapse><S w={11}><path d="M0 1h11" stroke="#999" strokeWidth="2" /><path d="M.5 10l5-5.500 5 5.500z" fill="#999" /></S></Collapse>
          </Strip>
          <Workspace>
            <SideRail $w={29} $pl={2}><SideTab $h={110} $flip $ls={0.15}><span>Model Browser</span></SideTab></SideRail>
            <Editor>
              <DocTabs>
                <NavIcons><NavArrow /><NavArrow off /><NavArrow up /></NavIcons>
                <DocTab $w={84} $active>agend<Cross c="#777" /></DocTab>
                <DocTab $w={74}>Host<Cross /></DocTab>
                <DocTab $w={74}>Host<Cross /></DocTab>
                <DocTab $w={74}>Host<Cross /></DocTab>
                <DocTab $w={85}>Node3<Cross /></DocTab>
                <Keyboard><S w={20} h={11}><rect x=".5" y=".5" width="19" height="10" fill="#eee" stroke="#888" /><path d="M2 2.500h16M2 5.500h16M5 8.500h10" stroke="#909090" strokeWidth="1.500" strokeDasharray="2 .7" /></S></Keyboard>
              </DocTabs>
              <Columns>
                <Palette>
                  {tools.map((t, i) => (t === "rule" ? <Rule key={i} /> : t === "grow" ? <Grow key={i} /> : <Tool key={i}>{t}</Tool>))}
                </Palette>
                <View>
                  <Crumbs>
                    <Crumb><Simulink frame />platoon3</Crumb><CrumbArrow />
                    <Crumb><Chart />Node1</Crumb><CrumbArrow />
                    <Crumb><Chart />agend</Crumb>
                    <Grow />
                    <Caret $s={5} />
                  </Crumbs>
                  <ViewBody>
                    <ViewMain>
                      <Canvas>
                        <Subchart />
                        <State $x={327} $y={332} $w={458} $h={436} $r={12} $end="#f4e8d0" $pad="2px 4.500px">Inactive</State>
                        <State $x={530} $y={346} $w={118} $h={60}>Ready<br />entry:<br />agree1 = <Num>1</Num>;</State>
                        <State $x={349} $y={388} $w={105} $h={65}>Init<br />entry:<br />dead = false;</State>
                        <State $x={349} $y={523} $w={74} $h={50}>Wait</State>
                        <State $x={972} $y={350} $w={473} $h={432} $r={12} $end="#f4e8d0" $pad="2px 4.500px">Active</State>
                        <State $x={1073} $y={379} $w={121} $h={60}>Platoon<br />entry:<br /><Fn>platoon_function</Fn>();</State>
                        <State $x={1033} $y={498} $w={331} $h={206} $r={0} $end="#f4e8d0" $pad="0 3px"><Keyword>function</Keyword><Fn $ml={5.500}>platoon_function</Fn></State>
                        <Transitions />
                        <Note $x={512.500} $y={481}>[dead == false]</Note>
                        <Note $x={1150.500} $y={547}>[v4 &gt; <Num>50</Num>]</Note>
                        <Note $x={1093} $y={588}>{"{"}alert1 = <Num>1</Num>;{"}"}</Note>
                        <Note $x={1252.500} $y={585}>{"{"}ack1 = <Num>1</Num>;{"}"}</Note>
                        <Note $x={1081.500} $y={555}>1</Note>
                        <Note $x={1070.800} $y={569}>2</Note>
                        <Badge $x={136} $y={885}>
                          <S w={14}><rect x=".5" y=".5" width="13" height="13" rx="2" fill="#f7eecb" stroke="#2d4d86" /><g transform="translate(1.500 2) scale(.23)"><path d="M0 25l14-6c5-1 8-4 10-9 3-4 5-6 8-9l-5 14-11 17z" fill="#3a86c4" /><path d="M16 32c6-4 9-12 12-22 1-5 3-9 5-9 3 0 7 20 15 36-5-4-9-6-12-5-5 1-8 12-15 13-2-6-2-9-5-13z" fill="#d9501c" /></g></S>
                        </Badge>
                      </Canvas>
                      <HScroll>
                        <ScrollPart $len={14}><Tri d="l" /></ScrollPart>
                        <ScrollPart $len={101} $track />
                        <ScrollPart $len={1610} />
                        <ScrollPart $len={14}><Tri d="r" /></ScrollPart>
                      </HScroll>
                    </ViewMain>
                    <VScroll>
                      <ScrollPart $vert $len={14}><Tri d="u" /></ScrollPart>
                      <ScrollPart $vert $len={604} />
                      <ScrollPart $vert $len={46} $track />
                      <ScrollPart $vert $len={14}><Tri d="d" /></ScrollPart>
                      <Corner />
                    </VScroll>
                  </ViewBody>
                </View>
              </Columns>
            </Editor>
            <SideRail $w={32} $pl={6}><SideTab $h={133} $ls={0.05}><span>Property Inspector</span></SideTab></SideRail>
          </Workspace>
          <StatusBar>
            <span>Ready</span>
            <Zoom>80%</Zoom>
            <Solver>auto(VariableStepDiscrete)</Solver>
          </StatusBar>
        </Window>
      </Desktop>
    </Screen>
  );
}
